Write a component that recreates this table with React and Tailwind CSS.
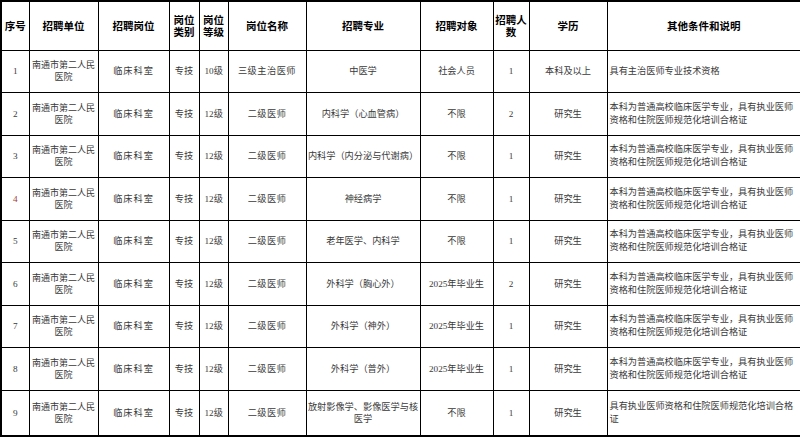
import React from "react";

const cols = [28, 69, 71, 30, 29, 78, 114, 73, 36, 78, 194];

const headers = [
  "序号",
  "招聘单位",
  "招聘岗位",
  "岗位类别",
  "岗位等级",
  "岗位名称",
  "招聘专业",
  "招聘对象",
  "招聘人数",
  "学历",
  "其他条件和说明",
];

const std = "本科为普通高校临床医学专业，具有执业医师资格和住院医师规范化培训合格证";

const rows = [
  ["1", "10级", "三级主治医师", "中医学", "社会人员", "1", "本科及以上", "具有主治医师专业技术资格"],
  ["2", "12级", "二级医师", "内科学（心血管病）", "不限", "2", "研究生", std],
  ["3", "12级", "二级医师", "内科学（内分泌与代谢病）", "不限", "1", "研究生", std],
  ["4", "12级", "二级医师", "神经病学", "不限", "1", "研究生", std],
  ["5", "12级", "二级医师", "老年医学、内科学", "不限", "1", "研究生", std],
  ["6", "12级", "二级医师", "外科学（胸心外）", "2025年毕业生", "2", "研究生", std],
  ["7", "12级", "二级医师", "外科学（神外）", "2025年毕业生", "1", "研究生", std],
  ["8", "12级", "二级医师", "外科学（普外）", "2025年毕业生", "1", "研究生", std],
  ["9", "12级", "二级医师", "放射影像学、影像医学与核医学", "不限", "1", "研究生", "具有执业医师资格和住院医师规范化培训合格证"],
];

const font = {
  fontFamily: '"Liberation Serif", "Noto Sans CJK SC", serif',
};

export default function App() {
  const td = "border border-black text-center align-middle px-[1px] leading-[12px]";

  return (
    <div className="w-[800px] h-[437px] bg-white overflow-hidden">
      <table
        className="table-fixed border-collapse border-2 border-black w-[800px] text-[9.2px] text-[#3a3a3a]"
        style={font}
      >
        <colgroup>
          {cols.map((w, i) => (
            <col key={i} style={{ width: w }} />
          ))}
        </colgroup>
        <thead>
          <tr className="h-[49px]">
            {headers.map((h, i) => (
              <th
                key={i}
                className={`${td} font-bold text-black text-[10.5px] leading-[12px]`}
                style={{ fontFamily: '"Noto Sans CJK SC", sans-serif' }}
              >
                {h}
              </th>
            ))}
          </tr>
        </thead>
        <tbody>
          {rows.map((r, i) => (
            <tr key={i} className={i === 8 ? "h-[46px]" : "h-[42.5px]"}>
              <td className={`${td} ${r[0] === "4" ? "text-[#a33a3a]" : ""}`}>{r[0]}</td>
              <td className={`${td} px-0 text-[9px]`}>南通市第二人民医院</td>
              <td className={`${td} tracking-[1px]`}>临床科室</td>
              <td className={td}>专技</td>
              <td className={`${td} text-left pl-[5px]`}>{r[1]}</td>
              <td className={`${td} tracking-[0.5px]`}>{r[2]}</td>
              <td className={`${td} px-0`}>{r[3]}</td>
              <td className={td}>{r[4]}</td>
              <td className={td}>{r[5]}</td>
              <td className={td}>{r[6]}</td>
              <td className={`${td} text-left pl-[2px] pr-0 leading-[13px]`}>{r[7]}</td>
            </tr>
          ))}
        </tbody>
      </table>
    </div>
  );
}
